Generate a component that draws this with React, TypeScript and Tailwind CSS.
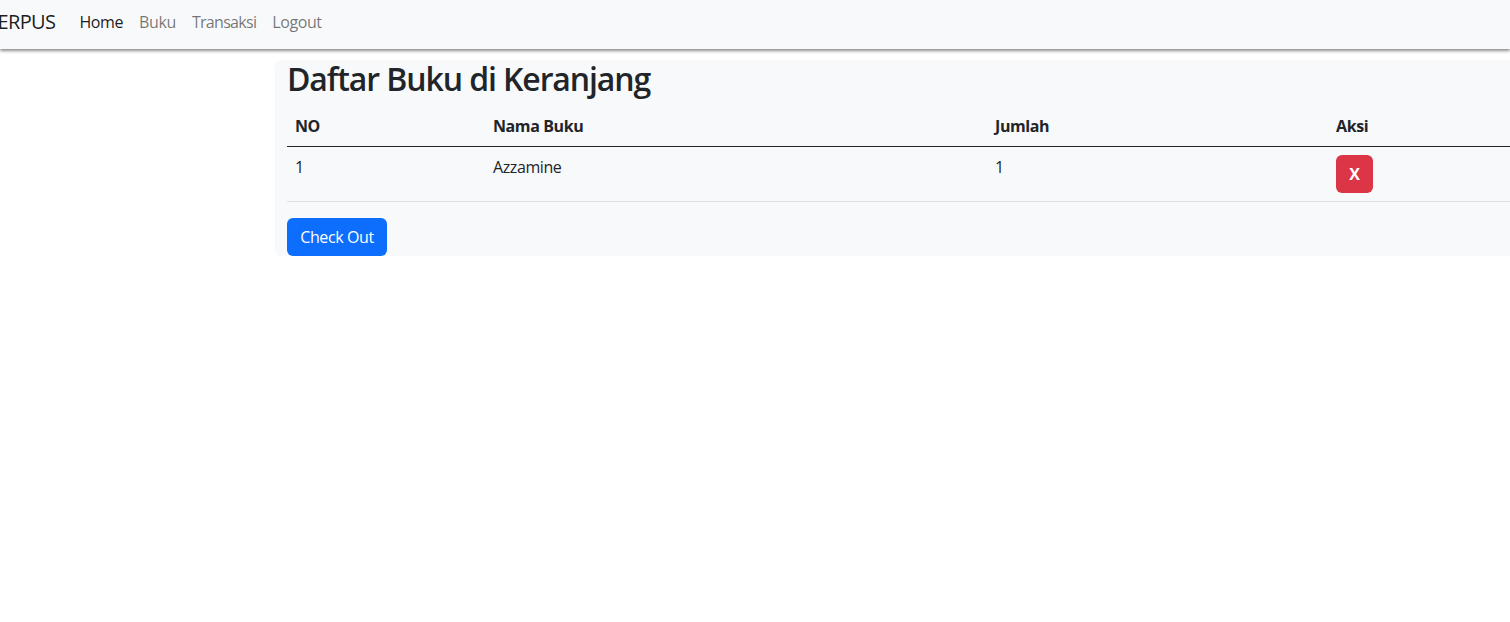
import React from "react";

const font = { fontFamily: '"Open Sans", "Noto Sans", "Liberation Sans", sans-serif' };

export default function App() {
  return (
    <div className="w-[1510px] h-[622px] overflow-hidden bg-white text-[#212529] text-[16px] tracking-[-0.4px]" style={font}>
      <nav className="h-[49px] pb-[5px] bg-[#f8f9fa] flex items-center shadow-[0_2px_3px_rgba(0,0,0,0.45)] relative z-10">
        <span className="ml-[-14px] mr-[16px] text-[20px] leading-[30px] text-[rgba(0,0,0,0.9)] whitespace-nowrap tracking-[-0.6px]">PERPUS</span>
        <a className="px-[8px] leading-[24px] text-[rgba(0,0,0,0.9)]">Home</a>
        <a className="px-[8px] leading-[24px] text-[rgba(0,0,0,0.55)]">Buku</a>
        <a className="px-[8px] leading-[24px] text-[rgba(0,0,0,0.55)] tracking-[-0.7px]">Transaksi</a>
        <a className="px-[8px] leading-[24px] text-[rgba(0,0,0,0.55)]">Logout</a>
      </nav>
      <div className="pt-[11px] pl-[275px]">
        <div className="w-[1260px] bg-[#f8f9fa] rounded-[6px] px-[12px]">
          <h1 className="text-[32px] font-semibold leading-[38px] mb-[8px] tracking-[-1.1px]">Daftar Buku di Keranjang</h1>
          <table className="w-full border-collapse mb-[16px] text-left">
            <thead>
              <tr className="border-b border-[#212529]">
                <th className="w-[198px] p-[8px] font-bold leading-[24px]">NO</th>
                <th className="w-[502px] p-[8px] font-bold leading-[24px]">Nama Buku</th>
                <th className="w-[341px] p-[8px] font-bold leading-[24px]">Jumlah</th>
                <th className="p-[8px] font-bold leading-[24px]">Aksi</th>
              </tr>
            </thead>
            <tbody>
              <tr className="border-b border-[#dee2e6]">
                <td className="p-[8px] align-top leading-[24px]">1</td>
                <td className="p-[8px] align-top leading-[24px]">Azzamine</td>
                <td className="p-[8px] align-top leading-[24px]">1</td>
                <td className="p-[8px] align-top">
                  <button className="h-[38px] w-[37px] rounded-[6px] bg-[#dc3545] text-white font-bold leading-[24px]">X</button>
                </td>
              </tr>
            </tbody>
          </table>
          <button className="h-[38px] w-[100px] rounded-[6px] bg-[#0d6efd] text-white leading-[24px]">Check Out</button>
        </div>
      </div>
    </div>
  );
}
